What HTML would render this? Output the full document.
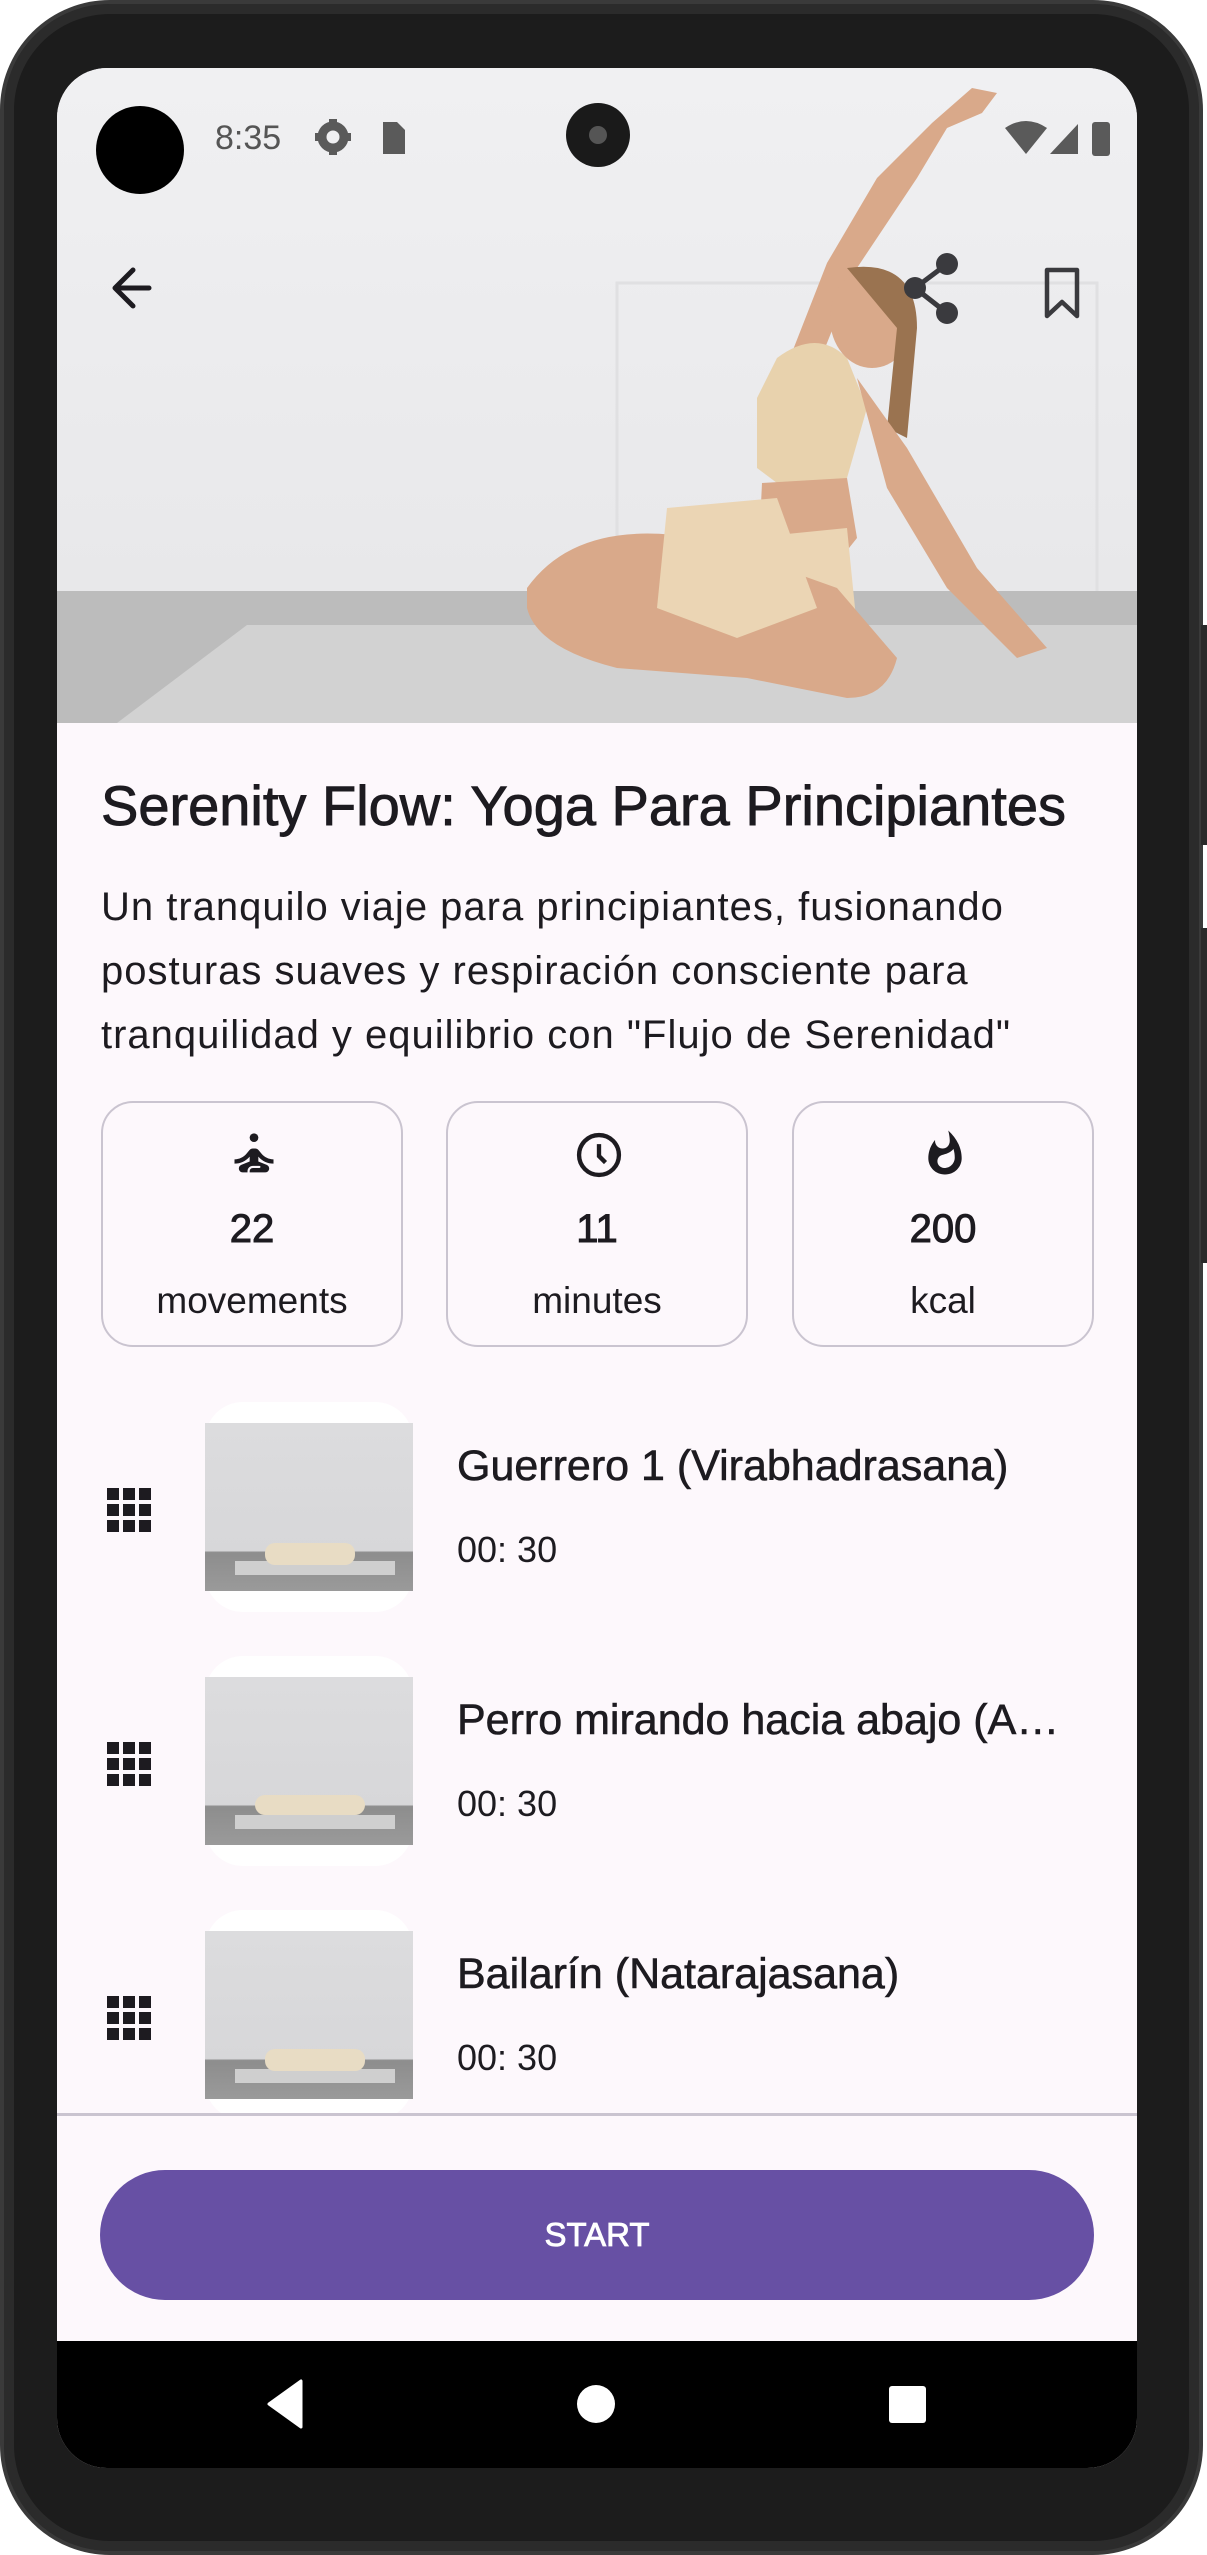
<!DOCTYPE html>
<html><head><meta charset="utf-8"><style>
*{margin:0;padding:0;box-sizing:border-box}
html,body{width:1207px;height:2555px;background:#fff;overflow:hidden;font-family:"Liberation Sans",sans-serif}
.phone{position:absolute;left:0;top:0;width:1203px;height:2555px;background:#1c1c1c;border-radius:110px;border:4px solid #3a3a3a;box-shadow:inset 0 0 0 10px #2b2b2b}
.btn{position:absolute;right:0;width:6px;background:#2a2a2a}
.screen{position:absolute;left:57px;top:68px;width:1080px;height:2400px;background:#fdf8fc;border-radius:50px;overflow:hidden}
.hero{position:absolute;left:0;top:0;width:1080px;height:655px}
.abs{position:absolute}
.title{left:44px;top:705px;font-size:56px;color:#1d1b20;white-space:nowrap;-webkit-text-stroke:0.9px #1d1b20}
.desc{left:44px;top:807px;font-size:40px;line-height:64px;color:#1d1b20;letter-spacing:1px;width:1030px;white-space:nowrap}
.card{position:absolute;top:1033px;width:302px;height:246px;border:2px solid #cac4d0;border-radius:32px;text-align:center}
.card svg{position:absolute;left:125px;top:26px}
.card .n{position:absolute;left:0;right:0;top:104px;font-size:40px;color:#1d1b20;-webkit-text-stroke:1px #1d1b20}
.card .l{position:absolute;left:0;right:0;top:177px;font-size:37px;color:#1d1b20}
.item{position:absolute;left:0;width:1080px;height:210px}
.thumbw{position:absolute;left:148px;top:0;width:208px;height:210px;background:#fff;border-radius:38px}
.thumb{position:absolute;left:148px;top:21px;width:208px;height:168px;background:linear-gradient(#dcdcde 0,#d7d7d9 76%,#8d8d8d 77%,#9a9a9a 100%)}
.mat{position:absolute;left:30px;bottom:16px;width:160px;height:14px;background:#cfcfcf}
.body{position:absolute;background:#e8dcc4;border-radius:10px}
.grip{position:absolute;left:50px;top:86px}
.it{position:absolute;left:400px;top:40px;font-size:43px;color:#1d1b20;white-space:nowrap;width:640px;overflow:hidden;text-overflow:ellipsis;-webkit-text-stroke:0.6px #1d1b20}
.tm{position:absolute;left:400px;top:127px;font-size:36px;color:#1d1b20}
</style></head><body>
<div class="phone"></div>
<div class="btn" style="top:625px;height:220px"></div>
<div class="btn" style="top:928px;height:335px"></div>
<div class="screen">
  <svg class="hero" width="1080" height="655" viewBox="0 0 1080 655">
    <defs><linearGradient id="w" x1="0" y1="0" x2="0" y2="1"><stop offset="0" stop-color="#f0f0f2"/><stop offset="1" stop-color="#e6e6e8"/></linearGradient></defs>
    <rect width="1080" height="655" fill="url(#w)"/>
    <rect x="560" y="215" width="480" height="330" fill="none" stroke="#e0e0e2" stroke-width="3"/>
    <rect x="0" y="523" width="1080" height="132" fill="#bcbcbc"/>
    <polygon points="190,557 1080,557 1080,655 60,655" fill="#d2d2d2"/>
    <path d="M915 20 L940 25 L925 45 L890 60 L860 110 L800 200 L760 300 L725 310 L770 195 L820 110 L875 55 Z" fill="#d9a98a"/>
    <path d="M720 290 Q760 260 790 290 L810 340 L790 410 L740 430 L700 400 L700 330 Z" fill="#e8d2ad"/>
    <path d="M705 415 L790 410 L800 470 L760 520 L700 520 Z" fill="#d9a98a"/>
    <path d="M690 470 L790 460 L800 560 L750 570 L690 560 Z" fill="#ebd5b4"/>
    <ellipse cx="815" cy="250" rx="42" ry="50" fill="#d9a98a"/>
    <path d="M790 200 Q860 190 860 260 L850 370 L830 360 L840 260 Z" fill="#9a7350"/>
    <path d="M470 520 Q520 450 640 470 L780 520 L840 590 Q830 630 790 630 L690 610 L560 600 Q480 580 470 540 Z" fill="#d9a98a"/>
    <path d="M610 440 L720 430 L760 540 L680 570 L600 540 Z" fill="#ebd5b4"/>
    <path d="M800 310 L850 380 L920 500 L990 580 L960 590 L890 520 L830 420 Z" fill="#d9a98a"/>
    <circle cx="83" cy="82" r="44" fill="#000"/>
    <text x="158" y="72" font-family="Liberation Sans" font-size="34" fill="#555" dominant-baseline="middle">8:35</text>
    <g transform="translate(276,69)"><circle r="11" fill="none" stroke="#5a5a5a" stroke-width="9"/><g fill="#5a5a5a"><rect x="-4" y="-18" width="8" height="8"/><rect x="-4" y="10" width="8" height="8"/><rect x="-18" y="-4" width="8" height="8"/><rect x="10" y="-4" width="8" height="8"/></g></g>
    <path d="M326 54 L340 54 L348 62 L348 86 L326 86 Z" fill="#5a5a5a"/>
    <circle cx="541" cy="67" r="32" fill="#1a1a1a"/><circle cx="541" cy="67" r="9" fill="#555"/>
    <path d="M948 60 Q969 46 990 60 L969 86 Z" fill="#5a5a5a"/>
    <path d="M993 86 L1021 56 L1021 86 Z" fill="#5a5a5a"/>
    <rect x="1035" y="54" width="18" height="34" rx="3" fill="#5a5a5a"/>
    <path d="M92 220 L58 220 M76 202 L58 220 L76 238" stroke="#1d1b20" stroke-width="5" fill="none" stroke-linecap="round" stroke-linejoin="round"/>
    <g fill="#3a3a3e"><circle cx="890" cy="196" r="11"/><circle cx="858" cy="220" r="11"/><circle cx="890" cy="245" r="11"/></g>
    <path d="M890 196 L858 220 L890 245" stroke="#3a3a3e" stroke-width="5" fill="none"/>
    <path d="M990 202 L1020 202 L1020 248 L1005 234 L990 248 Z" stroke="#3a3a3e" stroke-width="4.5" fill="none" stroke-linejoin="round"/>
  </svg>
  <div class="abs title">Serenity Flow: Yoga Para Principiantes</div>
  <div class="abs desc">Un tranquilo viaje para principiantes, fusionando<br>posturas suaves y respiración consciente para<br>tranquilidad y equilibrio con "Flujo de Serenidad"</div>

  <div class="card" style="left:44px"><svg width="52" height="52" viewBox="0 0 24 24"><circle cx="12" cy="4" r="2" fill="#1d1b20"/><path d="M21 16v-2c-2.24 0-4.16-.96-5.6-2.68l-1.34-1.6A1.99 1.99 0 0012.53 9h-1.05c-.59 0-1.15.26-1.53.72l-1.34 1.6C7.16 13.04 5.24 14 3 14v2c2.77 0 5.19-1.17 7-3.25V15l-3.88 1.55c-.67.27-1.12.93-1.12 1.66C5 19.2 5.8 20 6.79 20H9v-.5a2.5 2.5 0 012.5-2.5h3c.28 0 .5.22.5.5s-.22.5-.5.5h-3c-.83 0-1.5.67-1.5 1.5v.5h7.21c.99 0 1.79-.8 1.79-1.79 0-.73-.45-1.39-1.12-1.66L14 15v-2.25c1.81 2.08 4.23 3.25 7 3.25z" fill="#1d1b20"/></svg><div class="n">22</div><div class="l">movements</div></div>
  <div class="card" style="left:389px"><svg width="52" height="52" viewBox="0 0 24 24"><circle cx="12" cy="12" r="9.2" stroke="#1d1b20" stroke-width="2" fill="none"/><path d="M12 7v5.5l3 3" stroke="#1d1b20" stroke-width="2" fill="none"/></svg><div class="n">11</div><div class="l">minutes</div></div>
  <div class="card" style="left:735px"><svg width="52" height="52" viewBox="0 0 24 24"><path d="M13.5.7s.7 2.6.7 4.7c0 2-1.3 3.6-3.3 3.6S7.4 7.4 7.4 5.4l.03-.36C5.5 7.3 4.3 10.3 4.3 13.5 4.3 17.6 7.6 21 12 21s7.7-3.4 7.7-7.5C19.7 8.6 17.3 4.2 13.5.7zM11.7 18c-1.8 0-3.2-1.4-3.2-3.1 0-1.6 1-2.8 2.8-3.1 1.8-.4 3.6-1.2 4.6-2.6.4 1.3.6 2.6.6 4 0 2.6-2.1 4.8-4.8 4.8z" fill="#1d1b20"/></svg><div class="n">200</div><div class="l">kcal</div></div>

  <div style="position:absolute;left:0;top:0;width:1080px;height:2046px;overflow:hidden">
    <div class="item" style="top:1334px">
      <svg class="grip" width="46" height="46" viewBox="0 0 46 46" fill="#1d1b20"><rect x="0" y="0" width="12" height="12"/><rect x="16" y="0" width="12" height="12"/><rect x="32" y="0" width="12" height="12"/><rect x="0" y="16" width="12" height="12"/><rect x="16" y="16" width="12" height="12"/><rect x="32" y="16" width="12" height="12"/><rect x="0" y="32" width="12" height="12"/><rect x="16" y="32" width="12" height="12"/><rect x="32" y="32" width="12" height="12"/></svg>
      <div class="thumbw"></div><div class="thumb"><div class="mat"></div><div class="body" style="left:60px;top:120px;width:90px;height:22px"></div></div>
      <div class="it">Guerrero 1 (Virabhadrasana)</div><div class="tm">00: 30</div>
    </div>
    <div class="item" style="top:1588px">
      <svg class="grip" width="46" height="46" viewBox="0 0 46 46" fill="#1d1b20"><rect x="0" y="0" width="12" height="12"/><rect x="16" y="0" width="12" height="12"/><rect x="32" y="0" width="12" height="12"/><rect x="0" y="16" width="12" height="12"/><rect x="16" y="16" width="12" height="12"/><rect x="32" y="16" width="12" height="12"/><rect x="0" y="32" width="12" height="12"/><rect x="16" y="32" width="12" height="12"/><rect x="32" y="32" width="12" height="12"/></svg>
      <div class="thumbw"></div><div class="thumb"><div class="mat"></div><div class="body" style="left:50px;top:118px;width:110px;height:20px"></div></div>
      <div class="it" style="width:625px">Perro mirando hacia abajo (Adho Mukha)</div><div class="tm">00: 30</div>
    </div>
    <div class="item" style="top:1842px">
      <svg class="grip" width="46" height="46" viewBox="0 0 46 46" fill="#1d1b20"><rect x="0" y="0" width="12" height="12"/><rect x="16" y="0" width="12" height="12"/><rect x="32" y="0" width="12" height="12"/><rect x="0" y="16" width="12" height="12"/><rect x="16" y="16" width="12" height="12"/><rect x="32" y="16" width="12" height="12"/><rect x="0" y="32" width="12" height="12"/><rect x="16" y="32" width="12" height="12"/><rect x="32" y="32" width="12" height="12"/></svg>
      <div class="thumbw"></div><div class="thumb"><div class="mat"></div><div class="body" style="left:60px;top:118px;width:100px;height:22px"></div></div>
      <div class="it">Bailarín (Natarajasana)</div><div class="tm">00: 30</div>
    </div>
  </div>
  <div style="position:absolute;left:0;top:2045px;width:1080px;height:3px;background:#cac4d0"></div>
  <div style="position:absolute;left:43px;top:2102px;width:994px;height:130px;border-radius:65px;background:#6750a4;color:#fff;font-size:33px;text-align:center;line-height:130px;-webkit-text-stroke:0.8px #fff">START</div>
  <div style="position:absolute;left:0;top:2273px;width:1080px;height:127px;background:#000">
    <svg width="1080" height="127"><path d="M244 40 L244 86 L212 63 Z" fill="#fff" stroke="#fff" stroke-width="3" stroke-linejoin="round"/><circle cx="539" cy="63" r="19" fill="#fff"/><rect x="832" y="45" width="37" height="37" rx="3" fill="#fff"/></svg>
  </div>
</div>
</body></html>
